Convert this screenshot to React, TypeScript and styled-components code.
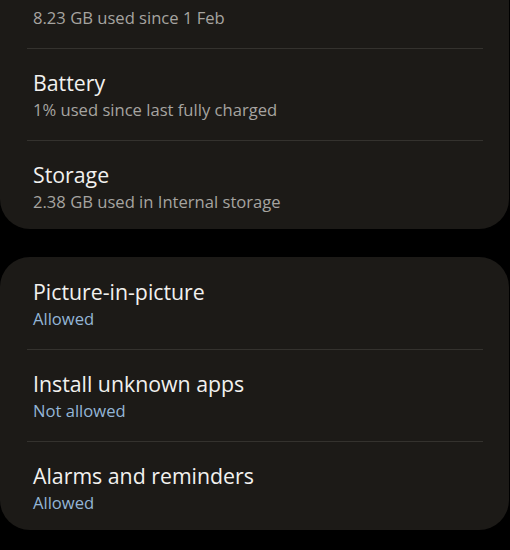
import React from "react";
import styled, { createGlobalStyle } from "styled-components";

interface ISettingItem {
  title: string;
  value: string;
  accent?: boolean;
}

const usageItems: ISettingItem[] = [
  { title: "Mobile data", value: "8.23 GB used since 1 Feb" },
  { title: "Battery", value: "1% used since last fully charged" },
  { title: "Storage", value: "2.38 GB used in Internal storage" },
];

const permissionItems: ISettingItem[] = [
  { title: "Picture-in-picture", value: "Allowed", accent: true },
  { title: "Install unknown apps", value: "Not allowed", accent: true },
  { title: "Alarms and reminders", value: "Allowed", accent: true },
];

const SettingsCard: React.FC<{ items: ISettingItem[] }> = ({ items }) => (
  <Card>
    {items.map((item) => (
      <Row key={item.title}>
        <Title>{item.title}</Title>
        <Value $accent={item.accent}>{item.value}</Value>
      </Row>
    ))}
  </Card>
);

export default function App() {
  return (
    <>
      <GlobalStyle />
      <Screen>
        <SettingsCard items={usageItems} />
        <SettingsCard items={permissionItems} />
      </Screen>
    </>
  );
}

const GlobalStyle = createGlobalStyle`
  html, body {
    margin: 0;
    padding: 0;
    background: #000000;
    overflow: hidden;
  }
  body {
    font-family: "Open Sans", "Noto Sans", sans-serif;
    -webkit-font-smoothing: antialiased;
  }
`;

// list is scrolled: first card starts above the viewport
const Screen = styled.div`
  display: flex;
  flex-direction: column;
  gap: 28px;
  width: 509px;
  margin-top: -44px;
`;

const Card = styled.div`
  display: flex;
  flex-direction: column;
  background: #1c1a17;
  border-radius: 30px;
  padding: 0 26px 0 27px;
`;

const Row = styled.div`
  display: flex;
  flex-direction: column;
  padding: 20px 0 18px 6px;
  border-top: 1px solid #34322e;

  &:first-child {
    border-top: none;
    padding-top: 21px;
  }

  &:last-child {
    padding-bottom: 15px;
  }
`;

const Title = styled.div`
  font-size: 21.3px;
  line-height: 28px;
  color: #f2f1ef;
`;

const Value = styled.div<{ $accent?: boolean }>`
  margin-top: 1px;
  font-size: 16.6px;
  line-height: 24px;
  color: ${(p) => (p.$accent ? "#93b5d6" : "#a6a4a0")};
`;
